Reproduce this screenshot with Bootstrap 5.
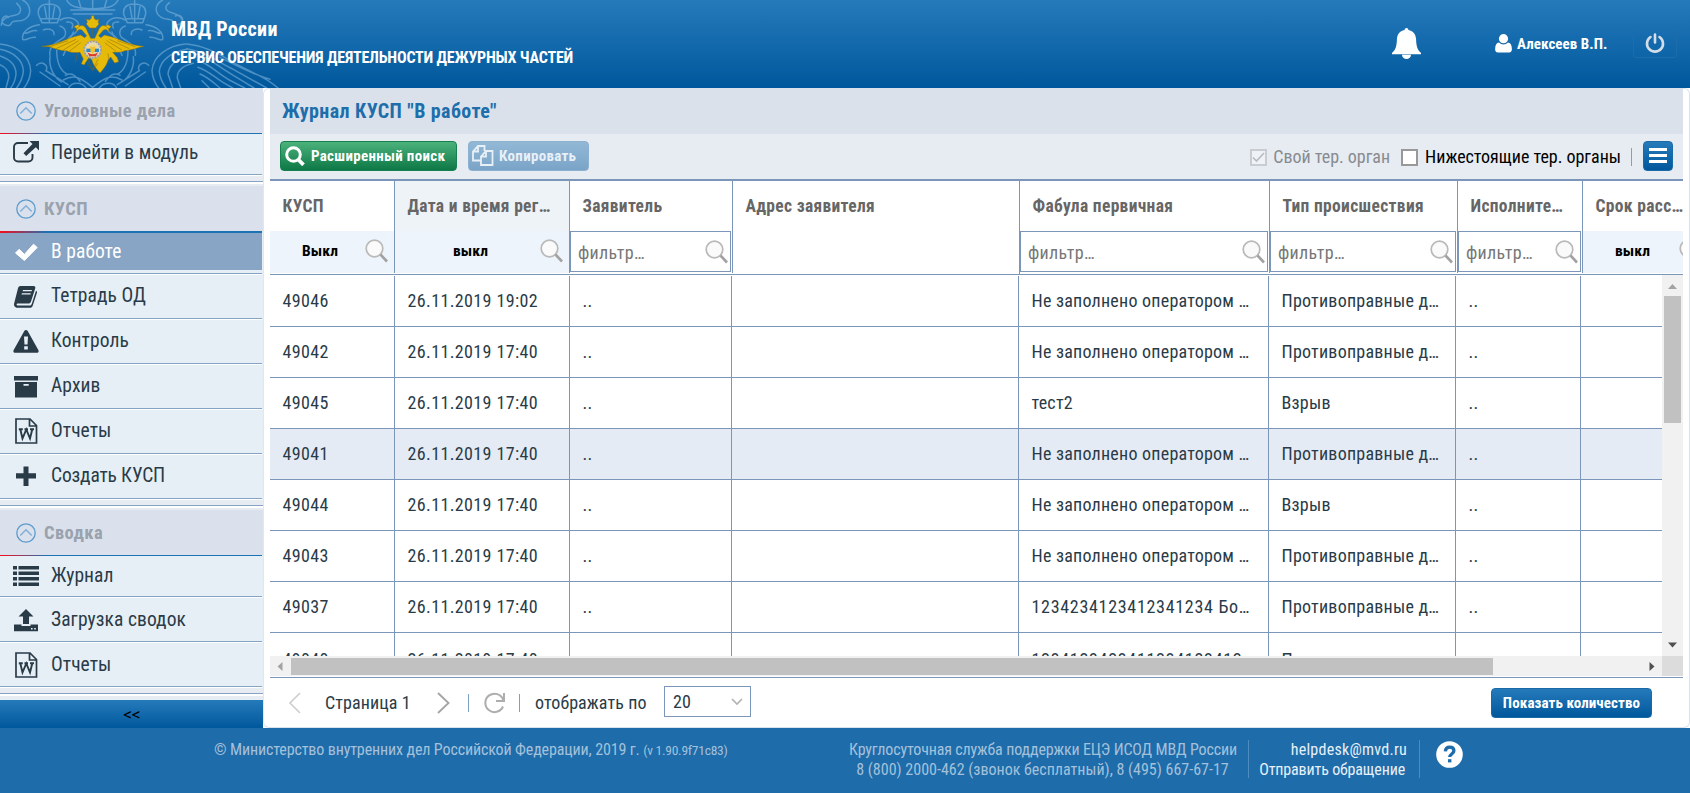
<!DOCTYPE html>
<html lang="ru">
<head>
<meta charset="utf-8">
<title>Журнал КУСП</title>
<link rel="stylesheet" href="https://cdn.jsdelivr.net/npm/bootstrap@5.3.0/dist/css/bootstrap.min.css">
<style>
:root{--line:#7b96b9;--blue:#1d6eaa}
body{width:1690px;height:793px;overflow:hidden;font-family:Roboto,"Open Sans",sans-serif;font-stretch:75%;color:#2a3b48;line-height:1.2;background:#fff}
svg{display:block;flex:none}
.grad{background:linear-gradient(#257aba,#00589c)}
.topbar{height:88px;background:linear-gradient(#257aba,#00589c);color:#fff}
.brand-text{margin-left:-119px;padding-top:17px}
.brand-name{font-size:20px;font-weight:700;letter-spacing:.3px;line-height:24px}
.brand-sub{font-size:16px;font-weight:700;letter-spacing:-.2px;line-height:20px;margin-top:7px;white-space:nowrap}
.user-name{font-size:15px;font-weight:700;letter-spacing:.05px;width:91px;white-space:nowrap}
.power-btn{width:44px;height:28px;border:1px solid #1e6ca9;border-top-color:transparent;border-radius:4px}
.middle{height:640px}
.side{width:263px;background:#e6eef5}
.side-head{height:45px;background:#dae1ec;color:#9aa2ae;font-size:18.5px;font-weight:700;letter-spacing:.4px;padding:1px 0 0 16px;gap:8px}
.side-rule{height:1px;width:262px;background:linear-gradient(90deg,#ed1120 0 1%,#1d72b3 18%)}
.side-rule.thick{height:2px}
.side-item{height:45px;width:262px;background:#e6eff6;border-bottom:1px solid #fff;box-shadow:inset 0 -1px #86a3c5;font-size:19.5px;letter-spacing:.08px;padding:0 0 2px 13px;color:#2a3b48;text-decoration:none;gap:12px}
.side-item svg{width:26px;height:26px}
.side-item.short{height:42px;padding-bottom:3px}
.side-item.chosen{background:linear-gradient(#88a5c5 0 37px,#e6eff6 37px);color:#fff}
.side-gap{height:10px;border-bottom:2px solid #e7ecf3;background:linear-gradient(#e7ecf3 0 5px,#86a3c5 5px 6px,#fff 6px)}
.collapse-bar{height:28px;color:#000;font:600 15px "Open Sans",sans-serif;margin-top:auto}
.panel{border:1px solid #d9e2ec;border-left-color:#dfe7f0;border-radius:6px;width:1427px;padding:0 6px}
.panel-title{height:45px;background:#dae1eb;color:var(--blue);font-size:20px;font-weight:700;letter-spacing:.4px;padding:0 0 1px 12px}
.tools{height:47px;background:#e7ecf3;border-bottom:2px solid var(--line);padding:0 10px 1px;font-size:18px;letter-spacing:-.02px}
.tool-btn{height:30px;border-radius:4px;color:#fff;font-size:15px;font-weight:700;letter-spacing:.3px;border:1px solid;padding:0 10px 1px 4px;gap:6px;white-space:nowrap}
.b-green{width:177px;background:linear-gradient(#4cb27c,#0d7846);border-color:#15814e}
.b-pale{width:121px;background:linear-gradient(#92b8d6,#7aa4c7);border-color:#8bb0d0;color:#e8f0f7}
.b-blue{background:linear-gradient(#257aba,#00589c);border-color:#1b6aa8;justify-content:center;padding:0}
.opts{padding-top:2px}
.box{width:17px;height:17px;border:2px solid #999;background:#fff}
.box.dim{border-color:#c9ccd0;background:#eff2f6}
.vsep{width:1px;height:18px;background:#7fa0c6}
.hgrid{display:grid;grid-template-columns:125px 175px 163px 287px 250px 188px 125px 100px;height:94px;border-bottom:1px solid var(--line);position:relative;overflow:hidden}
.hcell{border-right:1px solid var(--line);height:92px}
.hcell:nth-child(4){height:93px}
.hcell:last-child{border-right:0}
.hname{height:50px;line-height:51px;padding:0 8px 0 12.5px;font-size:17.5px;font-weight:700;letter-spacing:.32px;color:#666;white-space:nowrap;overflow:hidden}
.fbtn{height:42px;background:#edf4fc;color:#000;font-size:15.5px;font-weight:700;letter-spacing:.1px;padding:0 6px 2px 33px}
.fbox{height:41px;margin-right:1px;border:1px solid var(--line);color:#777;font-size:18px;letter-spacing:.3px;padding:1px 2px 0 7px}
.fbox span{padding-top:1px}
.rows{height:380px;overflow:hidden}
.rgrid{display:grid;grid-template-columns:125px 175px 162px 287px 250px 187px 125px 81px;width:1392px;height:51px;flex:none}
.rgrid>div{border-right:1px solid var(--line);border-bottom:1px solid var(--line);padding:0 6px 0 12.5px;height:51px;line-height:50px;font-size:18px;letter-spacing:.23px;white-space:nowrap;overflow:hidden}
.rgrid>div:last-child{border-right:0}
.rgrid>div.num{letter-spacing:.38px}
.rgrid>div.digits{letter-spacing:.7px}
.rgrid:last-child>div{line-height:53px}
.rgrid.hot{background:#e4ebf5}
.bars{background:#f1f1f1}
.vbar{width:21px;margin-top:-1px}
.vthumb{width:17px;height:127px;background:#c1c1c1;margin:0 2px}
.hbar{height:20px}
.hthumb{width:1202px;height:17px;background:#c1c1c1}
.arr{width:21px;height:21px}
.pager{height:50px;border-top:1px solid var(--line);font-size:18px;letter-spacing:.1px}
.sel{width:87px;height:31px;border:1px solid var(--line);padding:0 7px 0 8px}
.foot{height:65px;background:#1e6ca9;color:#a4c1dc;font-size:16px;line-height:19.500px;letter-spacing:-.15px}
.foot .lt{color:#e6f0f9}
.fsep{width:1px;height:38px;background:#4c8cc0}
</style>
</head>
<body class="d-flex flex-column">
<header class="topbar d-flex align-items-start flex-shrink-0">
  <svg width="290" height="88" viewBox="0 0 870 264">
    <g fill="none" stroke="#8fc0e6" stroke-width="4.500" opacity=".5" stroke-linecap="round">
      <path d="M200 0c10 20 30 26 78 26s66-6 76-26M212 30h132M220 42h116M236 0l6 20M278 0v24M320 0l-6 20"/>
      <path d="M116 46c-6-24 10-34 30-34s40 8 34 34l-8 22h-46zM124 56h50M148 12v54M148 2v10M134 20l6 34M164 20l-6 34"/>
      <path d="M372 46c-6-24 10-34 30-34s40 8 34 34l-8 22h-46zM380 56h50M404 12v54M404 2v10M390 20l6 34M420 20l-6 34"/>
      <path d="M68 0c26 14 28 46 6 58-16 10-36 0-40 12s-20 6-26 0c-6-14 6-28 18-18M50 10c18 14 14 32-6 36-26 4-40 16-40 30"/>
      <path d="M488 0c-26 14-24 40-4 52 14 10 32 2 36 14s20 10 26 0-4-26-20-18M508 8c-18 14-10 26 8 30 20 6 34 14 32 34"/>
      <path d="M118 74c-30 4-54 22-50 44 10 6 20-8 38-6M180 78c22 8 20 30 6 38-26 16-40 28-36 50M76 100c12-2 20-10 34-8M130 90c16-8 34 0 32 14"/>
      <path d="M438 74c30 4 54 22 50 44-10 6-20-8-38-6M376 78c-22 8-20 30-6 38 26 16 40 28 36 50M480 100c-12-2-20-10-34-8M426 90c-16-8-34 0-32 14"/>
      <path d="M180 60c30-16 60 0 56 22s-30 22-34 42M376 60c-30-16-60 0-56 22s30 22 34 42M200 66c16-2 22 6 16 18M356 66c-16-2-22 6-16 18"/>
      <path d="M0 132c50 4 90 36 92 80-2 30-12 42-20 52M0 148c40 8 70 32 70 66-2 24-12 38-20 50M0 168c30 10 48 26 48 54-2 20-8 32-16 42M0 194c18 8 28 20 26 40l-8 30"/>
      <path d="M556 132c-50 4-98 36-100 80 2 30 12 42 20 52M560 148c-44 8-80 32-82 66 2 24 12 38 20 50M562 168c-30 10-56 26-58 54l14 42M580 190c-30 6-50 22-48 44l10 30"/>
      <path d="M560 132c50 4 100 30 140 56l64 32c30 14 54 30 70 44M560 146c60 10 90 38 140 62l100 56M580 160c50 12 70 38 120 66l62 38M592 180c40 14 60 40 96 60l46 24M594 202c30 10 50 30 76 46l28 16M600 222c24 10 34 20 60 42M606 242l22 22M660 172c40 20 80 44 150 66"/>
      <path d="M110 196c14-16 38 0 28 16l66 42M120 216l60 42M446 196c-14-16-38 0-28 16l-66 42M436 216l-60 42M150 170c-4 30 10 60 34 76M400 170c4 30-10 60-34 76M170 150c0 40 10 60 30 72M384 150c0 40-10 60-30 72"/>
      <path d="M190 240c30-18 50-10 88 22 38-32 58-40 88-22M206 264c10-20 40-18 52 0M350 264c-10-20-40-18-52 0M196 226c20-10 30 0 44 18M360 226c-20-10-30 0-44 18M220 96l-30 70M336 96l30 70"/>
    </g>
    <g fill="#e6ba08" stroke="#8f6e0c" stroke-width="1.500">
      <path d="M126 139c44-2 64-22 116-34l12 8 6-6-10-12c-6-10-16-8-20 0-2-10 4-18 14-18 6-2 12 4 16 12l12 26h12l12-26c4-8 10-14 16-12 10 0 16 8 14 18-4-8-14-10-20 0l-10 12 6 6 12-8c52 12 72 32 118 34-28 6-36 12-58 13-8 5-20 5-36 5l14 16 4 12-12 4-12-18-8 10c-4 16-12 24-24 38-12-14-20-22-24-38l-8-10-16 24-8-4 6-14-10-20c-16 2-30 0-38-4-22-1-38-7-54-13z"/>
      <path d="M262 66l-3-8 9 2 6-5v-8h8v8l6 5 9-2-3 8 3 6-10 12h-18l-10-12zM222 80l10-6 8 4-10 8zM316 78l8-4 10 6-8 6z"/>
    </g>
    <g fill="none" stroke="#8a660a" stroke-width="2.500" opacity=".6">
      <path d="M150 140l54-18M168 146l60-28M190 150l46-28M208 154l34-26M406 140l-54-18M388 146l-60-28M366 150l-46-28M348 154l-34-26M262 190l16 22 16-22M262 178l16 30 16-30M278 84v26M232 160l-6 28M324 160l4 28"/>
    </g>
    <circle cx="278" cy="149" r="25" fill="#e6d9b4" stroke="#9aa0b4" stroke-width="6" stroke-dasharray="6 3"/>
    <path d="M260 146q6-14 18-14t18 14z" fill="#f0d890"/><path d="M259 146h38v10h-38z" fill="#2a86c8"/><path d="M262 157q16 12 32 0l-6 12h-20z" fill="#dc3c28"/><path d="M271 138l7 4 7-4v16l-7 8-7-8z" fill="#f0c230"/>
  </svg>
  <div class="brand-text">
    <div class="brand-name">МВД России</div>
    <div class="brand-sub">СЕРВИС ОБЕСПЕЧЕНИЯ ДЕЯТЕЛЬНОСТИ ДЕЖУРНЫХ ЧАСТЕЙ</div>
  </div>
  <div class="d-flex align-items-center ms-auto h-100" style="padding-bottom:1px">
    <svg width="29" height="31" viewBox="0 0 29 31" style="margin-right:74px" fill="#fff"><path d="M14.5 0c1.200 0 1.900.8 1.900 2 5 .9 7.500 4.500 7.700 9.500.2 7.500 1.700 10.500 4.900 13.500v1.200H0V25c3.200-3 4.700-6 4.900-13.500.2-5 2.700-8.600 7.700-9.500 0-1.200.7-2 1.900-2zM10 26.700h9a4.500 4.300 0 0 1-9 0z"/></svg>
    <svg width="17" height="19" viewBox="0 0 17 19" fill="#fff"><circle cx="8.500" cy="4.700" r="4.600"/><path d="M4 8.600a6.400 6.400 0 0 0 9 0c2.400.3 3.800 2.300 3.900 6.400 0 2.300-1 3.500-2.700 3.500H2.800C1 18.500.1 17.300.1 15 .2 10.900 1.600 8.900 4 8.600z"/></svg>
    <span class="user-name" style="margin:0 25px 0 5px">Алексеев В.П.</span>
    <div class="power-btn d-flex justify-content-center align-items-center" style="margin-right:13px"><svg width="22" height="22" viewBox="0 0 22 22" fill="none" stroke="#d3dee8" stroke-width="2.600" stroke-linecap="round"><path d="M11 1.500v8M6.500 4a8 8 0 1 0 9 0"/></svg></div>
  </div>
</header>

<svg width="0" height="0" class="position-absolute">
  <symbol id="i-up" viewBox="0 0 20 20"><circle cx="10" cy="10" r="9.200" fill="none" stroke="#5b9bcd" stroke-width="1.300"/><path d="M4.300 12.500L10 6.700l5.700 5.800" fill="none" stroke="#7fb0d9" stroke-width="1.500"/></symbol>
  <symbol id="i-ext" viewBox="0 0 26 26"><path d="M15 3H5a4 4 0 0 0-4 4v10.500a4 4 0 0 0 4 4h10.500a4 4 0 0 0 4-4V14" fill="none" stroke="currentColor" stroke-width="1.900"/><path d="M16.500 1H26v9.500l-3.200-3.200-9.600 8.700-2.700-2.700 9-9.300z" fill="currentColor"/></symbol>
  <symbol id="i-check" viewBox="0 0 26 26"><path d="M2.500 14l3.700-3.700 5.200 5.100L20.500 5.200l3.700 3.300-12.800 13z" fill="currentColor" stroke="currentColor"/></symbol>
  <symbol id="i-book" viewBox="0 0 26 26"><path d="M7.500 3h13c1.600 0 2.200 1 1.700 2.600L18 18.500c-.5 1.500-1.400 2-2.700 2H4.700c-1.500 0-1.500 2 .2 2h11.600c1.300 0 1.800-.4 2.300-1.800L23 7.800c1.100.6 1.200 1.300.8 2.500l-4 12.200c-.5 1.400-1.400 2.300-3 2.300H4.300c-2.400 0-4-2.400-3-5L5 5.200C5.500 3.700 6.200 3 7.500 3zM10 7l-.4 1.300h9L19 7zM8.900 10.200l-.4 1.300h9l.4-1.300z" fill="currentColor" fill-rule="evenodd"/></symbol>
  <symbol id="i-warn" viewBox="0 0 26 26"><path d="M13 2c.8 0 1.300.4 1.700 1.100l10.600 19c.8 1.500 0 2.700-1.600 2.700H2.300C.7 24.800-.1 23.600.7 22.100l10.600-19C11.700 2.400 12.200 2 13 2zm-2 6.500l.5 8h3l.5-8zm.2 9.800v3.200h3.600v-3.200z" fill="currentColor" fill-rule="evenodd"/></symbol>
  <symbol id="i-arch" viewBox="0 0 26 26"><path d="M1 3h24v4.500H1zM2 9h22v15.500H2zm8.500 2v1.800h5.200V11z" fill="currentColor" fill-rule="evenodd"/></symbol>
  <symbol id="i-word" viewBox="0 0 26 26"><path d="M3 1h14l6.500 6.500V25H3zM16.500 1v7h7" fill="none" stroke="currentColor" stroke-width="1.700"/><path d="M5.800 11.300h4M11.500 11.300h3.500M17 11.300h4M7.300 11.300l2.200 9.200 3.800-9 3.700 9 2.300-9.200" fill="none" stroke="currentColor" stroke-width="1.900"/></symbol>
  <symbol id="i-plus" viewBox="0 0 26 26"><path d="M10.500 3.500h5v6.800H23v5.200h-7.500V23h-5v-7.500H3v-5.200h7.500z" fill="currentColor"/></symbol>
  <symbol id="i-list" viewBox="0 0 26 26"><path d="M0 3h4v3.400H0zM5.500 3H26v3.400H5.500zM0 8.500h4v3.400H0zM5.500 8.500H26v3.400H5.500zM0 14h4v3.400H0zM5.500 14H26v3.400H5.500zM0 19.500h4v3.400H0zM5.500 19.500H26v3.400H5.500z" fill="currentColor"/></symbol>
  <symbol id="i-load" viewBox="0 0 26 26"><path d="M13 2l7.500 7.500H16V17h-6V9.500H5.500zM1 17.500h7.500V19h9v-1.500H25v6.800H1zM18 21v1.600h1.600V21zm3.200 0v1.600h1.600V21z" fill="currentColor" fill-rule="evenodd"/></symbol>
  <symbol id="i-find" viewBox="0 0 23 24"><circle cx="9.500" cy="9.500" r="8.300" fill="#fafafa" stroke="#b9b9b9" stroke-width="1.700"/><path d="M15.500 15.500l6.500 7" stroke="#a2a2a2" stroke-width="2.600"/></symbol>
</svg>

<div class="middle d-flex flex-shrink-0">
  <nav class="side d-flex flex-column flex-shrink-0">
    <div class="side-head d-flex align-items-center flex-shrink-0"><svg width="20" height="20"><use href="#i-up"/></svg>Уголовные дела</div><div class="side-rule"></div>
    <a class="side-item short d-flex align-items-center"><svg><use href="#i-ext"/></svg>Перейти в модуль</a>
    <div class="side-gap"></div>
    <div class="side-head d-flex align-items-center flex-shrink-0"><svg width="20" height="20"><use href="#i-up"/></svg>КУСП</div><div class="side-rule thick"></div>
    <a class="side-item short chosen d-flex align-items-center"><svg><use href="#i-check"/></svg>В работе</a>
    <a class="side-item d-flex align-items-center"><svg><use href="#i-book"/></svg>Тетрадь ОД</a>
    <a class="side-item d-flex align-items-center"><svg><use href="#i-warn"/></svg>Контроль</a>
    <a class="side-item d-flex align-items-center"><svg><use href="#i-arch"/></svg>Архив</a>
    <a class="side-item d-flex align-items-center"><svg><use href="#i-word"/></svg>Отчеты</a>
    <a class="side-item d-flex align-items-center" style="letter-spacing:-.15px"><svg><use href="#i-plus"/></svg>Создать КУСП</a>
    <div class="side-gap"></div>
    <div class="side-head d-flex align-items-center flex-shrink-0"><svg width="20" height="20"><use href="#i-up"/></svg>Сводка</div><div class="side-rule"></div>
    <a class="side-item short d-flex align-items-center" style="padding-bottom:2px"><svg><use href="#i-list"/></svg>Журнал</a>
    <a class="side-item d-flex align-items-center" style="padding-bottom:1px"><svg><use href="#i-load"/></svg>Загрузка сводок</a>
    <a class="side-item d-flex align-items-center" style="padding-bottom:1px"><svg><use href="#i-word"/></svg>Отчеты</a>
    <div class="side-gap"></div>
    <div class="collapse-bar grad d-flex align-items-center justify-content-center">&lt;&lt;</div>
  </nav>

  <main class="panel d-flex flex-column">
    <div class="panel-title d-flex align-items-center flex-shrink-0">Журнал КУСП "В работе"</div>
    <div class="tools d-flex align-items-center flex-shrink-0">
      <div class="tool-btn b-green d-flex align-items-center"><svg width="20" height="20" viewBox="0 0 20 20" fill="none" stroke="#fff" stroke-width="3"><circle cx="8.500" cy="8.500" r="6.800"/><path d="M13.200 13.500l5.300 5.300" stroke-width="3.800"/></svg>Расширенный поиск</div>
      <div class="tool-btn b-pale d-flex align-items-center" style="margin-left:11px;padding-left:3px"><svg width="22" height="21" viewBox="0 0 22 21" fill="none" stroke="#e8f0f7" stroke-width="1.800"><path d="M8.500 15.500H1V6.500L6 1h6.500v5M1 6.500h5V1M9 11.500L14 6h6.500v14H9zM9 11.500h5V6"/></svg><span style="margin-left:-1px">Копировать</span></div>
      <div class="opts d-flex align-items-center ms-auto">
        <span class="box dim d-flex"><svg width="13" height="13" viewBox="0 0 13 13" fill="none" stroke="#b9bdc1" stroke-width="1.700"><path d="M1 6.500l3.500 3.500L12 2"/></svg></span><span style="margin:0 11px 0 6px;color:#888b8f">Свой тер. орган</span>
        <span class="box"></span><span style="margin:0 10px 0 7px;color:#000">Нижестоящие тер. органы</span>
        <span class="vsep" style="margin-right:11px"></span>
      </div>
      <div class="tool-btn b-blue d-flex align-items-center" style="width:30px"><svg width="18" height="16" viewBox="0 0 18 16"><path d="M0 0h18v3H0zM0 6h18v3H0zM0 12h18v3H0z" fill="#fff"/></svg></div>
    </div>
    <div class="hgrid flex-shrink-0" id="head"></div>
    <div class="d-flex flex-shrink-0" style="padding-top:1px">
      <div class="rows flex-fill" id="rows"></div>
      <div class="vbar bars d-flex flex-column">
        <svg class="arr" viewBox="0 0 21 21"><path d="M6 14h9l-4.500-5z" fill="#a3a3a3"/></svg>
        <div class="vthumb"></div>
        <svg class="arr mt-auto" viewBox="0 0 21 21"><path d="M6 7.500h9l-4.500 5z" fill="#505050"/></svg>
      </div>
    </div>
    <div class="d-flex flex-shrink-0 bars" style="margin-bottom:1px">
      <div class="hbar d-flex align-items-center flex-fill">
        <svg class="arr" viewBox="0 0 21 21"><path d="M12.500 6v9l-5-4.500z" fill="#a3a3a3"/></svg>
        <div class="hthumb"></div>
        <svg class="arr ms-auto" viewBox="0 0 21 21"><path d="M8.500 6v9l5-4.500z" fill="#505050"/></svg>
      </div>
      <div style="width:21px;background:#dcdcdc"></div>
    </div>
    <div class="pager d-flex align-items-center">
      <svg width="13" height="22" viewBox="0 0 13 22" style="margin-left:18px" fill="none" stroke="#cfcfcf" stroke-width="1.700"><path d="M12 1L2 11l10 10"/></svg>
      <span style="margin-left:24px;width:112px">Страница 1</span>
      <svg width="13" height="22" viewBox="0 0 13 22" fill="none" stroke="#a6a6a6" stroke-width="1.900"><path d="M1 1l10.500 10L1 21"/></svg>
      <span class="vsep" style="margin:0 15px 0 18px"></span>
      <svg width="21" height="22" viewBox="0 0 21 22" fill="none" stroke="#adadad" stroke-width="2"><path d="M19 14.500A9.200 9.200 0 1 1 19.200 7.800M20 1v8h-8"/></svg>
      <span class="vsep" style="margin:0 15px 0 14px"></span>
      <span style="width:129px">отображать по</span>
      <div class="sel d-flex align-items-center justify-content-between" style="margin-bottom:2px;padding-top:1px">20<svg width="12" height="8" viewBox="0 0 12 8" fill="none" stroke="#b3b3b3" stroke-width="1.700"><path d="M1 1l5 5 5-5"/></svg></div>
      <div class="tool-btn b-blue d-flex align-items-center ms-auto" style="width:161px;margin-right:31px;letter-spacing:.1px">Показать количество</div>
    </div>
  </main>
</div>

<footer class="foot d-flex align-items-start flex-shrink-0">
  <div style="width:635px;margin:12px 0 0 214px"><span style="letter-spacing:-.13px">© Министерство внутренних дел Российской Федерации, 2019 г.</span> <span style="font-size:13.500px;letter-spacing:-.25px">(v 1.90.9f71c83)</span></div>
  <div class="text-center text-nowrap" style="margin-top:12px;width:387px">Круглосуточная служба поддержки ЕЦЭ ИСОД МВД России<br><span style="letter-spacing:0">8 (800) 2000-462 (звонок бесплатный), 8 (495) 667-67-17</span></div>
  <div class="fsep" style="margin:12px 0 0 12px"></div>
  <div class="lt text-end text-nowrap" style="margin-top:12px;width:158px;letter-spacing:.25px"><span>helpdesk@mvd.ru</span><br><span style="margin-right:2px;letter-spacing:-.15px">Отправить обращение</span></div>
  <div class="fsep" style="margin:12px 0 0 12px"></div>
  <svg width="27" height="27" viewBox="0 0 27 27" style="margin:13px 0 0 16px"><circle cx="13.500" cy="13.500" r="13.300" fill="#fff"/><path d="M9.300 10.300c.3-2.900 2-4.100 4.300-4.100 2.500 0 4.300 1.300 4.300 3.600 0 3.200-4.200 3.200-4.200 6.300" fill="none" stroke="#1e6ca9" stroke-width="3.300"/><path d="M12 18.200h3.400v3.200H12z" fill="#1e6ca9"/></svg>
</footer>

<script src="https://cdn.jsdelivr.net/npm/bootstrap@5.3.0/dist/js/bootstrap.bundle.min.js"></script>
<script>
const find='<svg width="23" height="24" class="ms-auto"><use href="#i-find"/></svg>';
const cols=[['КУСП','Выкл'],['Дата и время рег…','выкл'],['Заявитель','f'],['Адрес заявителя',''],['Фабула первичная','f'],['Тип происшествия','f'],['Исполните…','f'],['Срок расс…','выкл']];
document.getElementById('head').innerHTML=cols.map(([n,f],i)=>{
  const flt=f==='f'?`<div class="fbox d-flex align-items-center"><span>фильтр…</span>${find}</div>`:f?`<div class="fbtn d-flex align-items-center" style="padding-left:${i===1?58:32}px;${i===7?'width:125px':''}">${f}${find}</div>`:'';
  return `<div class="hcell"${i===1?' style="background:#eef3f7"':''}><div class="hname"${i===7?' style="padding-right:0"':''}>${n}</div>${flt}</div>`}).join('');
const op='Не заполнено оператором …',pr='Противоправные д…';
const data=[['49046','19:02',op,pr],['49042','17:40',op,pr],['49045','17:40','тест2','Взрыв'],['49041','17:40',op,pr],['49044','17:40',op,'Взрыв'],['49043','17:40',op,pr],['49037','17:40','1234234123412341234 Бо…',pr],['49040','17:40','1234123423411234123412…',pr]];
document.getElementById('rows').innerHTML=data.map((r,i)=>`<div class="rgrid${i===3?' hot':''}"><div class="num">${r[0]}</div><div class="num">26.11.2019 ${r[1]}</div><div>..</div><div></div><div class="${i>5?'digits':''}">${r[2]}</div><div>${r[3]}</div><div>..</div><div></div></div>`).join('');
</script>
</body>
</html>
